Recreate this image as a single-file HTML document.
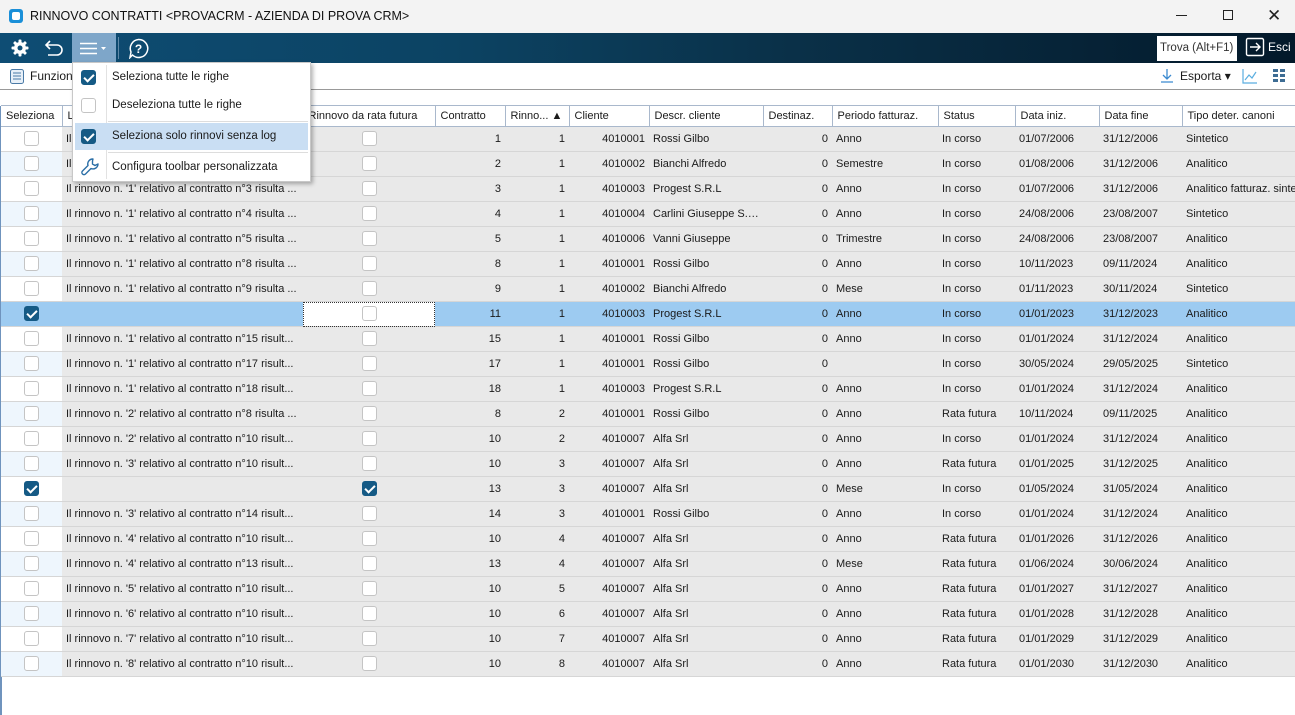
<!DOCTYPE html>
<html><head><meta charset="utf-8">
<style>
*{box-sizing:border-box;margin:0;padding:0}
body{width:1295px;height:715px;overflow:hidden;background:#fff;font-family:"Liberation Sans",sans-serif;font-size:11px;color:#1a1a1a;position:relative}
.title{position:absolute;left:0;top:0;width:1295px;height:33px;background:#f3f3f3}
.title .t{position:absolute;left:30px;top:9px;font-size:12.5px;color:#111}
.tb{position:absolute;left:0;top:33px;width:1295px;height:30px;background:linear-gradient(90deg,#0e4d74 0%,#0c4363 35%,#0a3149 60%,#03192a 100%)}
.tb2{position:absolute;left:0;top:63px;width:1295px;height:27px;background:#fff;border-bottom:1px solid #999}
table{position:absolute;left:1px;top:105px;border-collapse:collapse;table-layout:fixed;width:1294px}
td,th{height:25px;white-space:nowrap;overflow:hidden;text-overflow:ellipsis;padding:0 4px;border-bottom:1px solid #d6d6d6;font-weight:normal;line-height:14px}
th{height:21px;text-align:left;background:#fff;border-right:1px solid #a9b8cc;border-bottom:1px solid #a9b8cc;border-top:1px solid #a9b8cc;padding:0 5px}
td{background:#e9e9e9}
td.s{background:#fff;text-align:center}
tr.a td.s{background:#eef6fd}
td.r{text-align:right}
td.c{text-align:center}
tr.sel td{background:#9dcbf1}
tr.sel td.fc{background:#fff;outline:1px dotted #333;outline-offset:-1px}
.cb{display:inline-block;width:15px;height:15px;border:1px solid #c4c4c4;border-radius:3px;background:#fff;vertical-align:-3px}
.cb.on{background:#155a85;border-color:#155a85;position:relative}
.cb.on:after{content:"";position:absolute;left:4px;top:1px;width:4px;height:8px;border:solid #fff;border-width:0 2px 2px 0;transform:rotate(45deg)}
.menu{position:absolute;left:72px;top:62px;width:239px;height:120px;background:#fff;border:1px solid #c8c8c8;box-shadow:2px 2px 4px rgba(0,0,0,.3)}
.mi{position:absolute;left:2px;width:233px;height:27px;font-size:11.5px}
.mi span.tx{position:absolute;left:37px;top:7px}
.mi .cb{position:absolute;left:6px;top:6px}
.msep{position:absolute;left:35px;width:200px;height:1px;background:#ddd}
</style></head><body>
<div class="title">
<svg style="position:absolute;left:9px;top:9px" width="14" height="14"><rect x="0" y="0" width="14" height="14" rx="3" fill="#1a8fd8"/><rect x="3" y="3" width="8" height="8" rx="2" fill="#fff"/></svg>
<div class="t">RINNOVO CONTRATTI &lt;PROVACRM - AZIENDA DI PROVA CRM&gt;</div>
<div style="position:absolute;left:1176px;top:15px;width:11px;height:1px;background:#222"></div>
<div style="position:absolute;left:1223px;top:10px;width:10px;height:10px;border:1px solid #222"></div>
<div style="position:absolute;left:1267px;top:6px;font-size:17px;color:#222">✕</div>
</div>
<div class="tb">
<svg style="position:absolute;left:11px;top:6px" width="18" height="18" viewBox="0 0 18 18"><g fill="#fff"><circle cx="9" cy="9" r="6"/><rect x="7.5" y="0.5" width="3" height="17" rx="1"/><rect x="0.5" y="7.5" width="17" height="3" rx="1"/><rect x="7.5" y="0.5" width="3" height="17" rx="1" transform="rotate(45 9 9)"/><rect x="7.5" y="0.5" width="3" height="17" rx="1" transform="rotate(-45 9 9)"/></g><circle cx="9" cy="9" r="2.5" fill="#0e4f78"/></svg>
<svg style="position:absolute;left:44px;top:6px" width="20" height="18" viewBox="0 0 20 18"><path d="M6 2 L2 6 L6 10 M2 6 H13 A5 5 0 0 1 13 16 H4" fill="none" stroke="#fff" stroke-width="1.6"/></svg>
<div style="position:absolute;left:72px;top:0;width:44px;height:30px;background:#7ea6c9"></div>
<svg style="position:absolute;left:80px;top:9px" width="30" height="14"><path d="M0 1.5H17M0 6.5H17M0 11.5H17" stroke="#fff" stroke-width="1.5"/><path d="M21 5h5l-2.5 3z" fill="#fff"/></svg>
<div style="position:absolute;left:118px;top:4px;width:1px;height:22px;background:#5f89a8"></div>
<svg style="position:absolute;left:128px;top:5px" width="21" height="21" viewBox="0 0 21 21"><path d="M10.5 1.5a9 9 0 1 1 -6 15.5 L2 19.5 L3 14 A9 9 0 0 1 10.5 1.5z" fill="none" stroke="#fff" stroke-width="1.5"/><text x="10.5" y="15" font-size="12" font-weight="bold" fill="#fff" text-anchor="middle" font-family="Liberation Sans">?</text></svg>
<div style="position:absolute;left:1157px;top:3px;width:80px;height:25px;background:#fff;font-size:11.5px;color:#333;padding:6px 0 0 3px">Trova (Alt+F1)</div>
<svg style="position:absolute;left:1245px;top:4px" width="20" height="20" viewBox="0 0 20 20"><path d="M8 1.5H3A1.5 1.5 0 0 0 1.5 3V17A1.5 1.5 0 0 0 3 18.5H8 M8 1.5H17A1.5 1.5 0 0 1 18.5 3V17A1.5 1.5 0 0 1 17 18.5H8" fill="none" stroke="#fff" stroke-width="1.4"/><path d="M5 10H15M11 6L15 10L11 14" fill="none" stroke="#fff" stroke-width="1.4"/></svg>
<div style="position:absolute;left:1268px;top:7px;color:#fff;font-size:12px">Esci</div>
</div>
<div class="tb2">
<svg style="position:absolute;left:10px;top:6px" width="14" height="15"><rect x="0.5" y="0.5" width="13" height="14" rx="2" fill="#e8f0f8" stroke="#4a7aa6"/><path d="M3 4H11M3 7H11M3 10H11" stroke="#4a7aa6"/></svg>
<div style="position:absolute;left:30px;top:6px;font-size:12px">Funzioni</div>
<svg style="position:absolute;left:1160px;top:5px" width="14" height="16"><path d="M7 1V11M3 7L7 11L11 7M1 14H13" fill="none" stroke="#3b8ad0" stroke-width="1.3"/></svg>
<div style="position:absolute;left:1180px;top:6px;font-size:12px">Esporta ▾</div>
<svg style="position:absolute;left:1242px;top:5px" width="16" height="16"><path d="M1 1V15H15" fill="none" stroke="#5aaee0" stroke-width="1.2"/><path d="M3 12L7 7L10 10L14 4" fill="none" stroke="#5aaee0" stroke-width="1.2"/></svg>
<svg style="position:absolute;left:1273px;top:6px" width="12" height="13"><g fill="#3e6d94"><rect x="0" y="0" width="5" height="3"/><rect x="7" y="0" width="5" height="3"/><rect x="0" y="5" width="5" height="3"/><rect x="7" y="5" width="5" height="3"/><rect x="0" y="10" width="5" height="3"/><rect x="7" y="10" width="5" height="3"/></g></svg>
</div>
<div style="position:absolute;left:0;top:106px;width:2px;height:609px;background:#6f93bd"></div>
<table>
<colgroup><col style="width:61px"><col style="width:241px"><col style="width:132px"><col style="width:70px"><col style="width:64px"><col style="width:80px"><col style="width:114px"><col style="width:69px"><col style="width:106px"><col style="width:77px"><col style="width:84px"><col style="width:83px"><col style="width:113px"></colgroup>
<tr><th>Seleziona</th><th>Log</th><th>Rinnovo da rata futura</th><th>Contratto</th><th>Rinno... &#9650;</th><th>Cliente</th><th>Descr. cliente</th><th>Destinaz.</th><th>Periodo fatturaz.</th><th>Status</th><th>Data iniz.</th><th>Data fine</th><th>Tipo deter. canoni</th></tr>
<tr><td class="s"><span class="cb"></span></td><td>Il rinnovo n. '1' relativo al contratto n°1 risulta ...</td><td class="c"><span class="cb"></span></td><td class="r">1</td><td class="r">1</td><td class="r">4010001</td><td>Rossi Gilbo</td><td class="r">0</td><td>Anno</td><td>In corso</td><td>01/07/2006</td><td>31/12/2006</td><td>Sintetico</td></tr>
<tr class="a"><td class="s"><span class="cb"></span></td><td>Il rinnovo n. '1' relativo al contratto n°2 risulta ...</td><td class="c"><span class="cb"></span></td><td class="r">2</td><td class="r">1</td><td class="r">4010002</td><td>Bianchi Alfredo</td><td class="r">0</td><td>Semestre</td><td>In corso</td><td>01/08/2006</td><td>31/12/2006</td><td>Analitico</td></tr>
<tr><td class="s"><span class="cb"></span></td><td>Il rinnovo n. '1' relativo al contratto n°3 risulta ...</td><td class="c"><span class="cb"></span></td><td class="r">3</td><td class="r">1</td><td class="r">4010003</td><td>Progest S.R.L</td><td class="r">0</td><td>Anno</td><td>In corso</td><td>01/07/2006</td><td>31/12/2006</td><td style="text-overflow:clip">Analitico fatturaz. sintetica</td></tr>
<tr class="a"><td class="s"><span class="cb"></span></td><td>Il rinnovo n. '1' relativo al contratto n°4 risulta ...</td><td class="c"><span class="cb"></span></td><td class="r">4</td><td class="r">1</td><td class="r">4010004</td><td>Carlini Giuseppe S.A.S</td><td class="r">0</td><td>Anno</td><td>In corso</td><td>24/08/2006</td><td>23/08/2007</td><td>Sintetico</td></tr>
<tr><td class="s"><span class="cb"></span></td><td>Il rinnovo n. '1' relativo al contratto n°5 risulta ...</td><td class="c"><span class="cb"></span></td><td class="r">5</td><td class="r">1</td><td class="r">4010006</td><td>Vanni Giuseppe</td><td class="r">0</td><td>Trimestre</td><td>In corso</td><td>24/08/2006</td><td>23/08/2007</td><td>Analitico</td></tr>
<tr class="a"><td class="s"><span class="cb"></span></td><td>Il rinnovo n. '1' relativo al contratto n°8 risulta ...</td><td class="c"><span class="cb"></span></td><td class="r">8</td><td class="r">1</td><td class="r">4010001</td><td>Rossi Gilbo</td><td class="r">0</td><td>Anno</td><td>In corso</td><td>10/11/2023</td><td>09/11/2024</td><td>Analitico</td></tr>
<tr><td class="s"><span class="cb"></span></td><td>Il rinnovo n. '1' relativo al contratto n°9 risulta ...</td><td class="c"><span class="cb"></span></td><td class="r">9</td><td class="r">1</td><td class="r">4010002</td><td>Bianchi Alfredo</td><td class="r">0</td><td>Mese</td><td>In corso</td><td>01/11/2023</td><td>30/11/2024</td><td>Sintetico</td></tr>
<tr class="sel"><td class="s"><span class="cb on"></span></td><td></td><td class="c fc"><span class="cb"></span></td><td class="r">11</td><td class="r">1</td><td class="r">4010003</td><td>Progest S.R.L</td><td class="r">0</td><td>Anno</td><td>In corso</td><td>01/01/2023</td><td>31/12/2023</td><td>Analitico</td></tr>
<tr><td class="s"><span class="cb"></span></td><td>Il rinnovo n. '1' relativo al contratto n°15 risult...</td><td class="c"><span class="cb"></span></td><td class="r">15</td><td class="r">1</td><td class="r">4010001</td><td>Rossi Gilbo</td><td class="r">0</td><td>Anno</td><td>In corso</td><td>01/01/2024</td><td>31/12/2024</td><td>Analitico</td></tr>
<tr class="a"><td class="s"><span class="cb"></span></td><td>Il rinnovo n. '1' relativo al contratto n°17 risult...</td><td class="c"><span class="cb"></span></td><td class="r">17</td><td class="r">1</td><td class="r">4010001</td><td>Rossi Gilbo</td><td class="r">0</td><td></td><td>In corso</td><td>30/05/2024</td><td>29/05/2025</td><td>Sintetico</td></tr>
<tr><td class="s"><span class="cb"></span></td><td>Il rinnovo n. '1' relativo al contratto n°18 risult...</td><td class="c"><span class="cb"></span></td><td class="r">18</td><td class="r">1</td><td class="r">4010003</td><td>Progest S.R.L</td><td class="r">0</td><td>Anno</td><td>In corso</td><td>01/01/2024</td><td>31/12/2024</td><td>Analitico</td></tr>
<tr class="a"><td class="s"><span class="cb"></span></td><td>Il rinnovo n. '2' relativo al contratto n°8 risulta ...</td><td class="c"><span class="cb"></span></td><td class="r">8</td><td class="r">2</td><td class="r">4010001</td><td>Rossi Gilbo</td><td class="r">0</td><td>Anno</td><td>Rata futura</td><td>10/11/2024</td><td>09/11/2025</td><td>Analitico</td></tr>
<tr><td class="s"><span class="cb"></span></td><td>Il rinnovo n. '2' relativo al contratto n°10 risult...</td><td class="c"><span class="cb"></span></td><td class="r">10</td><td class="r">2</td><td class="r">4010007</td><td>Alfa Srl</td><td class="r">0</td><td>Anno</td><td>In corso</td><td>01/01/2024</td><td>31/12/2024</td><td>Analitico</td></tr>
<tr class="a"><td class="s"><span class="cb"></span></td><td>Il rinnovo n. '3' relativo al contratto n°10 risult...</td><td class="c"><span class="cb"></span></td><td class="r">10</td><td class="r">3</td><td class="r">4010007</td><td>Alfa Srl</td><td class="r">0</td><td>Anno</td><td>Rata futura</td><td>01/01/2025</td><td>31/12/2025</td><td>Analitico</td></tr>
<tr><td class="s"><span class="cb on"></span></td><td></td><td class="c"><span class="cb on"></span></td><td class="r">13</td><td class="r">3</td><td class="r">4010007</td><td>Alfa Srl</td><td class="r">0</td><td>Mese</td><td>In corso</td><td>01/05/2024</td><td>31/05/2024</td><td>Analitico</td></tr>
<tr class="a"><td class="s"><span class="cb"></span></td><td>Il rinnovo n. '3' relativo al contratto n°14 risult...</td><td class="c"><span class="cb"></span></td><td class="r">14</td><td class="r">3</td><td class="r">4010001</td><td>Rossi Gilbo</td><td class="r">0</td><td>Anno</td><td>In corso</td><td>01/01/2024</td><td>31/12/2024</td><td>Analitico</td></tr>
<tr><td class="s"><span class="cb"></span></td><td>Il rinnovo n. '4' relativo al contratto n°10 risult...</td><td class="c"><span class="cb"></span></td><td class="r">10</td><td class="r">4</td><td class="r">4010007</td><td>Alfa Srl</td><td class="r">0</td><td>Anno</td><td>Rata futura</td><td>01/01/2026</td><td>31/12/2026</td><td>Analitico</td></tr>
<tr class="a"><td class="s"><span class="cb"></span></td><td>Il rinnovo n. '4' relativo al contratto n°13 risult...</td><td class="c"><span class="cb"></span></td><td class="r">13</td><td class="r">4</td><td class="r">4010007</td><td>Alfa Srl</td><td class="r">0</td><td>Mese</td><td>Rata futura</td><td>01/06/2024</td><td>30/06/2024</td><td>Analitico</td></tr>
<tr><td class="s"><span class="cb"></span></td><td>Il rinnovo n. '5' relativo al contratto n°10 risult...</td><td class="c"><span class="cb"></span></td><td class="r">10</td><td class="r">5</td><td class="r">4010007</td><td>Alfa Srl</td><td class="r">0</td><td>Anno</td><td>Rata futura</td><td>01/01/2027</td><td>31/12/2027</td><td>Analitico</td></tr>
<tr class="a"><td class="s"><span class="cb"></span></td><td>Il rinnovo n. '6' relativo al contratto n°10 risult...</td><td class="c"><span class="cb"></span></td><td class="r">10</td><td class="r">6</td><td class="r">4010007</td><td>Alfa Srl</td><td class="r">0</td><td>Anno</td><td>Rata futura</td><td>01/01/2028</td><td>31/12/2028</td><td>Analitico</td></tr>
<tr><td class="s"><span class="cb"></span></td><td>Il rinnovo n. '7' relativo al contratto n°10 risult...</td><td class="c"><span class="cb"></span></td><td class="r">10</td><td class="r">7</td><td class="r">4010007</td><td>Alfa Srl</td><td class="r">0</td><td>Anno</td><td>Rata futura</td><td>01/01/2029</td><td>31/12/2029</td><td>Analitico</td></tr>
<tr class="a"><td class="s"><span class="cb"></span></td><td>Il rinnovo n. '8' relativo al contratto n°10 risult...</td><td class="c"><span class="cb"></span></td><td class="r">10</td><td class="r">8</td><td class="r">4010007</td><td>Alfa Srl</td><td class="r">0</td><td>Anno</td><td>Rata futura</td><td>01/01/2030</td><td>31/12/2030</td><td>Analitico</td></tr>
</table>
<div class="menu">
<div style="position:absolute;left:33px;top:2px;width:1px;height:114px;background:#e2e2e2"></div>
<div class="mi" style="top:1px"><span class="cb on"></span><span class="tx">Seleziona tutte le righe</span></div>
<div class="mi" style="top:29px"><span class="cb"></span><span class="tx">Deseleziona tutte le righe</span></div>
<div class="msep" style="top:58px"></div>
<div class="mi" style="top:60px;background:#c9def3"><span class="cb on"></span><span class="tx">Seleziona solo rinnovi senza log</span></div>
<div class="msep" style="top:89px"></div>
<div class="mi" style="top:91px"><svg style="position:absolute;left:5px;top:3px" width="20" height="20" viewBox="0 0 20 20"><path d="M13 2a5 5 0 0 0-5 6.5L2.5 14a2 2 0 0 0 3 3L11 11.5A5 5 0 0 0 18 7l-3 1.5-2.5-1.5V4z" fill="none" stroke="#2a6ea6" stroke-width="1.4" stroke-linejoin="round"/></svg><span class="tx">Configura toolbar personalizzata</span></div>
</div>
</body></html>
